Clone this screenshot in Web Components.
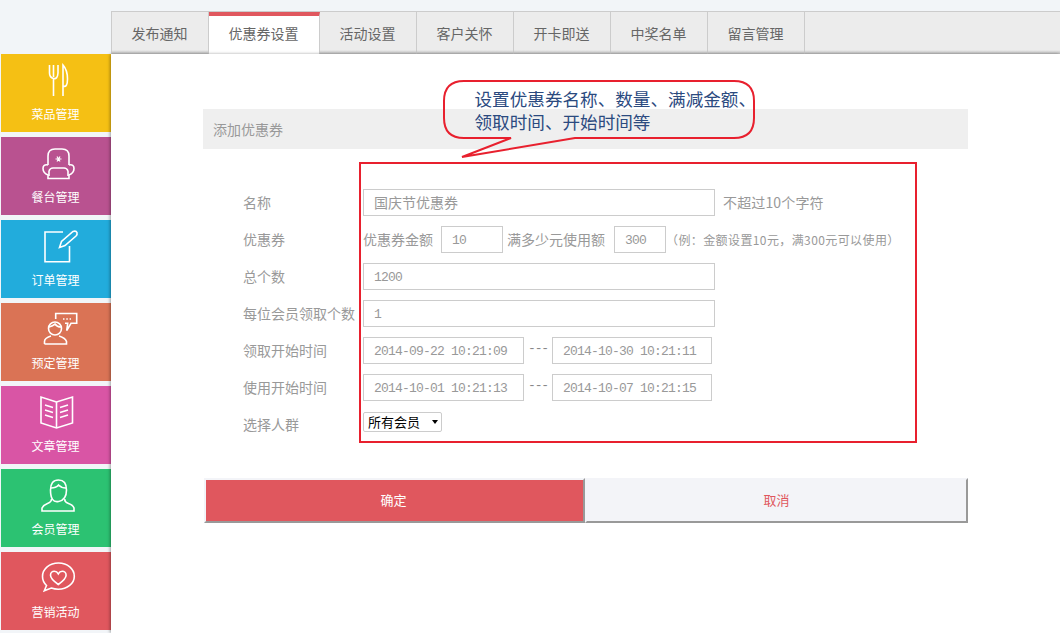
<!DOCTYPE html>
<html lang="zh-CN">
<head>
<meta charset="utf-8">
<title>添加优惠券</title>
<style>
  html, body { margin: 0; height: 100%; overflow: hidden; background: #f2f5f8; }
  body { font-family: "Noto Sans CJK SC", "Liberation Sans", sans-serif; }
</style>
</head>
<body>
<app-shell>
  <side-rail slot="rail">
    <rail-item color="#f5c014" icon="food" label="菜品管理"></rail-item>
    <rail-item color="#b95290" icon="chair" label="餐台管理"></rail-item>
    <rail-item color="#22acdc" icon="note" label="订单管理"></rail-item>
    <rail-item color="#da7355" icon="talk" label="预定管理"></rail-item>
    <rail-item color="#d955a5" icon="book" label="文章管理"></rail-item>
    <rail-item color="#2cc272" icon="user" label="会员管理"></rail-item>
    <rail-item color="#e0575e" icon="love" label="营销活动"></rail-item>
  </side-rail>

  <tab-strip slot="tabs">
    <tab-link>发布通知</tab-link>
    <tab-link active>优惠券设置</tab-link>
    <tab-link>活动设置</tab-link>
    <tab-link>客户关怀</tab-link>
    <tab-link>开卡即送</tab-link>
    <tab-link>中奖名单</tab-link>
    <tab-link>留言管理</tab-link>
  </tab-strip>

  <form-panel heading="添加优惠券">
    <form-row label="名称">
      <field-box size="352" cjk>国庆节优惠券</field-box>
      <row-note gap="8" big wide>不超过10个字符</row-note>
    </form-row>
    <form-row label="优惠券">
      <row-note big>优惠券金额</row-note>
      <field-box size="62" left="8">10</field-box>
      <row-note gap="4" big>满多少元使用额</row-note>
      <field-box size="52" left="9">300</field-box>
      <row-note>（例：金额设置10元，满300元可以使用）</row-note>
    </form-row>
    <form-row label="总个数"><field-box size="352">1200</field-box></form-row>
    <form-row label="每位会员领取个数"><field-box size="352">1</field-box></form-row>
    <form-row label="领取开始时间">
      <field-box size="161">2014-09-22 10:21:09</field-box>
      <date-dash></date-dash>
      <field-box size="160">2014-10-30 10:21:11</field-box>
    </form-row>
    <form-row label="使用开始时间">
      <field-box size="161">2014-10-01 10:21:13</field-box>
      <date-dash></date-dash>
      <field-box size="160">2014-10-07 10:21:15</field-box>
    </form-row>
    <form-row label="选择人群"><drop-select>所有会员</drop-select></form-row>

    <action-button slot="actions" kind="ok">确定</action-button>
    <action-button slot="actions" kind="cancel">取消</action-button>

    <note-frame slot="notes"></note-frame>
    <note-callout slot="notes">设置优惠券名称、数量、满减金额、<br>领取时间、开始时间等</note-callout>
  </form-panel>
</app-shell>

<script>
const ICONS = {
  food: `<path d="M18.5 1v8q0 4.5 4 5.5t4.5-5.5v-8M22.5 1v12M22.5 14v18"/><path d="M32 32V1q4.5 5 4.5 14t-4.5 7"/>`,
  chair: `<path d="M17 18V9q0-7 7-7h7q7 0 7 7v9"/><path d="M18 24q1-3 4-3h11q3 0 4 3"/><path d="M18 24v5M37 24v5"/>
    <path d="M17 18q-5-1-5 3.5t5 6.5v3.5h21V28q5-2 5-6.5T38 18"/>
    <path d="M24.5 12h6M26 9.5l3 5M29 9.5l-3 5" stroke-width="1.2"/>`,
  note: `<path d="M32 2H14v29.7h24.5V16"/><path d="M28.5 17.5l2-6L42 1.5q3-1 4 1 .5 2-1 3.5L34 15.5z"/>`,
  talk: `<circle cx="24" cy="15.5" r="6.5"/><path d="M18 14q4-1 6-3 2 3 6 3"/><path d="M13.5 31h22v-2.5q-1-3.5-7.5-5.5M20 23q-6.5 2-6.5 5.5V31"/>
    <path d="M24.7 6V.5h21v9.8H40l-4.3 7.4 1-7.4H34"/><path d="M32 6h8" stroke-dasharray="1.5 1.8"/>`,
  book: `<path d="M25.5 6L10 1v26l15.5 5 16-5V1z"/><path d="M25.5 6v26"/>
    <path d="M14 9l8 2.5M14 14l8 2.5M14 19l8 2.5M37 9l-8 2.5M37 14l-8 2.5M37 19l-8 2.5" stroke-width="1.5"/>`,
  user: `<path d="M19.5 11q0-10 8-10t8 10-8 11.5-8-11.5z"/><path d="M20 9q5 0 7.5-3 3 3 7.5 3"/><path d="M20.5 20q0 3-4 4.5T11 29v3h32v-3q-1-3-5.5-4.5T34 20M11 32h32"/>`,
  love: `<path d="M27.5 1C18.5 1 11.5 7 11.5 14.5c0 4 2 7 4 9l-2.2 5.2 7-2.7c2 .7 4.5 1.2 7 1.2 9 0 16-5.8 16-13S36.500 1 27.500 1z"/>
    <path d="M27.3 22.5c-5-3.5-7.800-6-7.800-9.200 0-2.400 1.800-4 3.800-4 1.700 0 3.200 1 4 2.500.8-1.500 2.300-2.500 4-2.500 2 0 3.800 1.600 3.800 4 0 3.200-2.800 5.700-7.800 9.200z"/>`
};

class AppShell extends HTMLElement {
  constructor() {
    super();
    this.attachShadow({ mode: "open" });
    this.shadowRoot.innerHTML = `
      <style>
        :host { display: flex; height: 633px; width: 1060px; overflow: hidden; }
        #left { flex: 0 0 111px; }
        #right { flex: 1; min-width: 0; display: flex; flex-direction: column; padding-top: 11px; box-sizing: border-box; }
      </style>
      <div id="left"><slot name="rail"></slot></div>
      <div id="right"><slot name="tabs"></slot><slot></slot></div>
    `;
  }
}
customElements.define("app-shell", AppShell);

class SideRail extends HTMLElement {
  constructor() {
    super();
    this.attachShadow({ mode: "open" });
    this.shadowRoot.innerHTML = `
      <style>
        :host { display: flex; flex-direction: column; gap: 5px; padding: 54px 0 0 1px; }
      </style>
      <slot></slot>
    `;
  }
}
customElements.define("side-rail", SideRail);

class RailItem extends HTMLElement {
  constructor() {
    super();
    this.attachShadow({ mode: "open" });
    const color = this.getAttribute("color");
    const icon = ICONS[this.getAttribute("icon")];
    this.shadowRoot.innerHTML = `
      <style>
        :host { display: flex; flex-direction: column; align-items: center; width: 110px; height: 78px; background: ${color}; color: #fff; }
        svg { display: block; width: 50px; height: 40px; margin-top: 10px; overflow: visible; fill: none; stroke: #fff; stroke-width: 1.6; }
        span { margin-right: 1px; font-size: 12px; line-height: 20px; }
      </style>
      <svg viewBox="0 0 50 40">${icon}</svg>
      <span>${this.getAttribute("label")}</span>
    `;
  }
}
customElements.define("rail-item", RailItem);

class TabStrip extends HTMLElement {
  constructor() {
    super();
    this.attachShadow({ mode: "open" });
    this.shadowRoot.innerHTML = `
      <style>
        :host { display: flex; flex: 0 0 43px; box-sizing: border-box; border-top: 1px solid #ccc; border-left: 1px solid #ccc;
          background: linear-gradient(#ececec 38px, #bdbdbd 42px); }
      </style>
      <slot></slot>
    `;
  }
}
customElements.define("tab-strip", TabStrip);

class TabLink extends HTMLElement {
  constructor() {
    super();
    this.attachShadow({ mode: "open" });
    this.shadowRoot.innerHTML = `
      <style>
        :host { display: block; box-sizing: border-box; padding: 0 20.5px 0 19.5px; border-right: 1px solid #ccc; font-size: 14px; line-height: 42px; color: #666; }
        :host([active]) { background: #fff; border-top: 4px solid #e0575e; line-height: 34px; }
      </style>
      <slot></slot>
    `;
  }
}
customElements.define("tab-link", TabLink);

class FormPanel extends HTMLElement {
  constructor() {
    super();
    this.attachShadow({ mode: "open" });
    this.shadowRoot.innerHTML = `
      <style>
        :host { display: block; flex: 1; position: relative; box-sizing: border-box; padding: 55px 92px 0; background: #fff;
          box-shadow: -1px 0 3px rgba(0,0,0,.35); }
        #head { height: 40px; padding-left: 10px; background: #efefef; font-size: 14px; line-height: 40px; color: #999; }
        #rows { display: flex; flex-direction: column; gap: 10px; margin-top: 40px; }
        #actions { display: flex; margin-top: 40px; padding-left: 1px; }
      </style>
      <div id="head">${this.getAttribute("heading")}</div>
      <div id="rows"><slot></slot></div>
      <div id="actions"><slot name="actions"></slot></div>
      <slot name="notes"></slot>
    `;
  }
}
customElements.define("form-panel", FormPanel);

class FormRow extends HTMLElement {
  constructor() {
    super();
    this.attachShadow({ mode: "open" });
    this.shadowRoot.innerHTML = `
      <style>
        :host { display: flex; align-items: center; height: 27px; padding-left: 40px; }
        label { flex: 0 0 120px; font-size: 14px; line-height: 27px; color: #999; white-space: nowrap; }
      </style>
      <label>${this.getAttribute("label")}</label>
      <slot></slot>
    `;
  }
}
customElements.define("form-row", FormRow);

class FieldBox extends HTMLElement {
  constructor() {
    super();
    this.attachShadow({ mode: "open" });
    const size = this.getAttribute("size");
    const left = this.getAttribute("left") || 0;
    this.shadowRoot.innerHTML = `
      <style>
        :host { display: block; flex: none; box-sizing: border-box; width: ${size}px; height: 27px; margin-left: ${left}px; padding-left: 10px;
          border: 1px solid #ccc; background: #fff; color: #999;
          font: 13px/27px "Liberation Mono", "Noto Sans CJK SC", monospace; letter-spacing: -.8px; white-space: nowrap; overflow: hidden; }
        :host([cjk]) { font: 14px/25px "Noto Sans CJK SC", sans-serif; letter-spacing: 0; }
      </style>
      <slot></slot>
    `;
  }
}
customElements.define("field-box", FieldBox);

class RowNote extends HTMLElement {
  constructor() {
    super();
    this.attachShadow({ mode: "open" });
    const gap = this.getAttribute("gap") || 0;
    this.shadowRoot.innerHTML = `
      <style>
        :host { display: block; flex: none; margin-left: ${gap}px; font-size: 12px; letter-spacing: .4px; line-height: 27px; color: #999; white-space: nowrap; }
        :host([big]) { font-size: 14px; letter-spacing: 0; }
        :host([wide]) { letter-spacing: .15px; }
      </style>
      <slot></slot>
    `;
  }
}
customElements.define("row-note", RowNote);

class DateDash extends HTMLElement {
  constructor() {
    super();
    this.attachShadow({ mode: "open" });
    this.shadowRoot.innerHTML = `
      <style>
        :host { display: block; flex: 0 0 28px; box-sizing: border-box; padding-bottom: 3px; text-align: center;
          font: 13px/22px "Liberation Mono", monospace; letter-spacing: -1.2px; color: #888; }
      </style>
      ---
    `;
  }
}
customElements.define("date-dash", DateDash);

class DropSelect extends HTMLElement {
  constructor() {
    super();
    this.attachShadow({ mode: "open" });
    this.shadowRoot.innerHTML = `
      <style>
        :host { display: flex; align-items: center; align-self: flex-start; box-sizing: border-box; width: 79px; height: 20px; padding: 0 3px 0 4px; margin-top: 1px;
          border: 1px solid #ccc; border-radius: 2px; background: #fff; font-size: 13px; line-height: 18px; color: #000; }
        i { margin-left: auto; border: 3.5px solid transparent; border-top: 4px solid #000; border-bottom: 0; }
      </style>
      <slot></slot><i></i>
    `;
  }
}
customElements.define("drop-select", DropSelect);

class ActionButton extends HTMLElement {
  constructor() {
    super();
    this.attachShadow({ mode: "open" });
    this.shadowRoot.innerHTML = `
      <style>
        :host { display: block; box-sizing: border-box; height: 45px; text-align: center; font-size: 13px; line-height: 39px;
          border-style: solid; border-width: 2px; border-color: #f3f4f8 #999 #999 #f3f4f8; }
        :host([kind="ok"]) { flex: 0 0 381px; padding-right: 2px; background: #e0575e; color: #fff; }
        :host([kind="cancel"]) { flex: 0 0 383px; background: #f3f4f8; color: #e0575e; }
      </style>
      <slot></slot>
    `;
  }
}
customElements.define("action-button", ActionButton);

class NoteFrame extends HTMLElement {
  constructor() {
    super();
    this.attachShadow({ mode: "open" });
    this.shadowRoot.innerHTML = `
      <style>
        :host { position: absolute; left: 248px; top: 108px; box-sizing: border-box; width: 558px; height: 281px;
          border: 2px solid #e8202e; pointer-events: none; }
      </style>
    `;
  }
}
customElements.define("note-frame", NoteFrame);

class NoteCallout extends HTMLElement {
  constructor() {
    super();
    this.attachShadow({ mode: "open" });
    this.shadowRoot.innerHTML = `
      <style>
        :host { position: absolute; left: 329px; top: 24px; width: 320px; height: 84px; }
        svg { position: absolute; inset: 0; overflow: visible; fill: none; stroke: #e8202e; stroke-width: 2; }
        div { position: relative; padding: 9px 0 0 34.5px; font-size: 17.6px; line-height: 23px; color: #2b4a7f; white-space: nowrap; }
      </style>
      <svg width="320" height="84" viewBox="0 0 320 84">
        <path d="M24 3H294Q314 3 314 23V40Q314 60 294 60H135L22 79 71 60H24Q4 60 4 40V23Q4 3 24 3Z"/>
      </svg>
      <div><slot></slot></div>
    `;
  }
}
customElements.define("note-callout", NoteCallout);
</script>
</body>
</html>
